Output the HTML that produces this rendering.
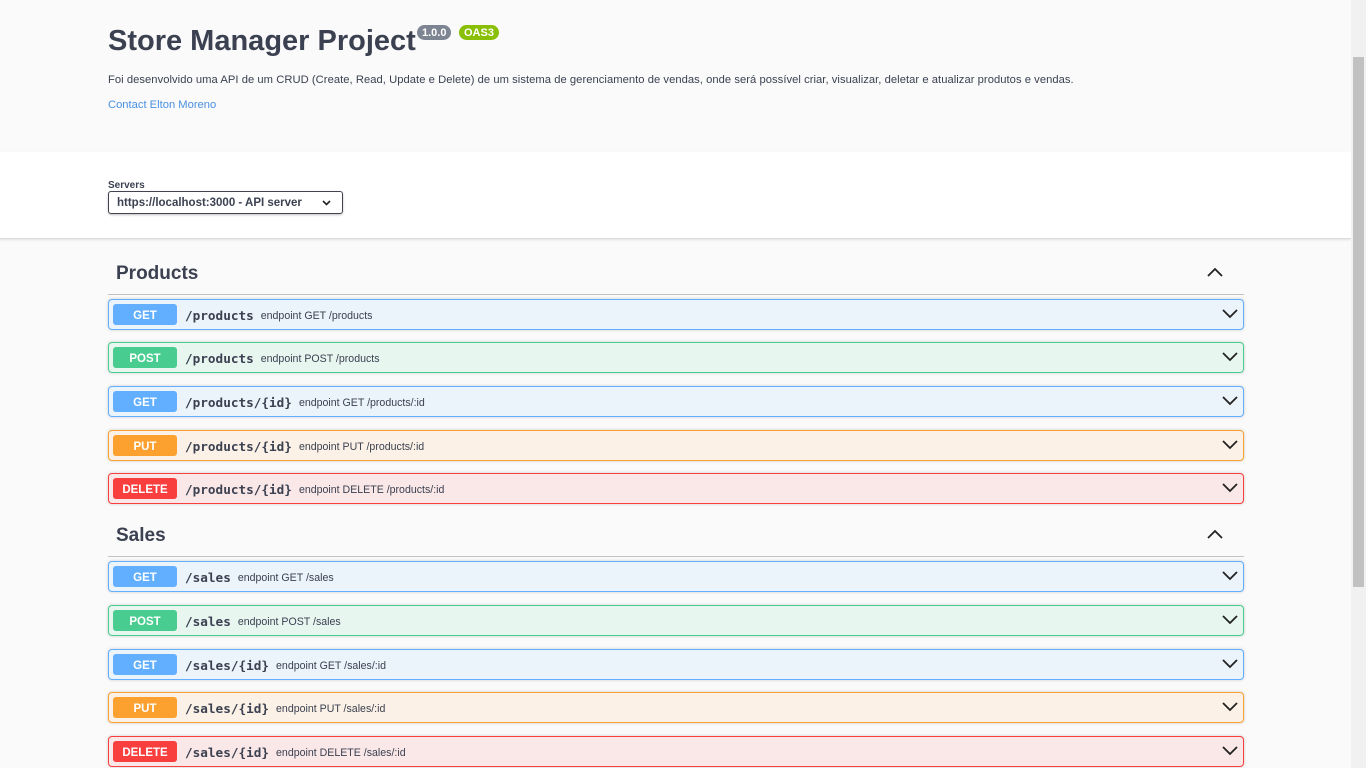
<!DOCTYPE html>
<html><head><meta charset="utf-8"><style>
*{box-sizing:border-box;margin:0;padding:0}
html,body{width:1366px;height:768px;overflow:hidden;background:#fafafa;font-family:"Liberation Sans",sans-serif;color:#3b4151}
.main{position:absolute;left:0;top:0;width:1351px}
.info{height:152px;background:#fafafa;padding:0 108px;position:relative}
h1{position:absolute;left:108px;top:25px;font-size:29px;font-weight:bold;color:#3b4151}
.badge{position:absolute;top:25px;height:15px;border-radius:8px;color:#fff;font-size:11px;font-weight:bold;line-height:16px;padding:0 5px}
.desc{position:absolute;left:108px;top:74px;font-size:11.2px;letter-spacing:0.05px}
.contact{position:absolute;left:108px;top:99px;font-size:11.2px;color:#4990e2}
.servers{position:absolute;top:152px;left:0;width:1351px;height:87px;background:#fff;border-bottom:1px solid #ddd;box-shadow:0 1px 2px rgba(0,0,0,.1)}
.servers .lbl{position:absolute;left:108px;top:28px;font-size:10px;font-weight:bold}
.sel{position:absolute;left:108px;top:39px;width:235px;height:23px;border:1px solid #41444e;border-radius:3px;box-shadow:0 1px 2px rgba(0,0,0,.25);font-size:11.5px;font-weight:bold;padding:5px 8px}
.sel svg{position:absolute;right:11px;top:8px}
.tag{position:absolute;left:108px;width:1136px;height:22px;border-bottom:1px solid rgba(59,65,81,.3)}
.tag span{position:absolute;left:8px;top:-10px;font-size:19px;font-weight:bold}
.tag svg{position:absolute;right:21px;top:-6px}
.op{position:absolute;left:108px;width:1136px;height:31px;border:1px solid;border-radius:4px;box-shadow:0 0 3px rgba(0,0,0,.19)}
.m{position:absolute;left:4px;top:4px;width:64px;height:21px;border-radius:3px;color:#fff;font-size:11.5px;font-weight:bold;text-align:center;line-height:24px}
.p{position:absolute;left:76px;top:8px;font-family:"DejaVu Sans Mono","Liberation Mono",monospace;font-weight:bold;font-size:12.7px;color:#3b4151}
.d{font-family:"Liberation Sans",sans-serif;font-weight:normal;font-size:10.6px;margin-left:7px;position:relative;top:-1px}
.op svg{position:absolute;right:5px;top:9px}
.get{background:#ebf3fb;border-color:#61affe}.get .m{background:#61affe}
.post{background:#e8f6f0;border-color:#49cc90}.post .m{background:#49cc90}
.put{background:#fbf1e6;border-color:#fca130}.put .m{background:#fca130}
.del{background:#fae7e7;border-color:#f93e3e}.del .m{background:#f93e3e}
.sb{position:absolute;left:1351px;top:0;width:15px;height:768px;background:#f1f1f1}
.sb div{position:absolute;left:2px;top:57px;width:11px;height:530px;background:#c1c1c1}
</style></head><body>
<div class="main">
<div class="info">
<h1>Store Manager Project</h1>
<span class="badge" style="left:417px;background:#7d8492">1.0.0</span>
<span class="badge" style="left:459px;background:#89bf04">OAS3</span>
<div class="desc">Foi desenvolvido uma API de um CRUD (Create, Read, Update e Delete) de um sistema de gerenciamento de vendas, onde será possível criar, visualizar, deletar e atualizar produtos e vendas.</div>
<div class="contact">Contact Elton Moreno</div>
</div>
<div class="servers"><div class="lbl">Servers</div><div class="sel">https://localhost:3000 - API server<svg width="9" height="6" viewBox="0 0 9 6"><path d="M1 1l3.5 3.5L8 1" stroke="#222" stroke-width="1.6" fill="none"/></svg></div></div>

<div class="tag" style="top:273px"><span>Products</span><svg width="16" height="10" viewBox="0 0 16 10"><path d="M1 9L8 2l7 7" stroke="#222" stroke-width="1.8" fill="none"/></svg></div>
<div class="op get" style="top:299px"><div class="m">GET</div><div class="p">/products<span class="d">endpoint GET /products</span></div><svg width="16" height="10"><path d="M1 1l7 7 7-7" stroke="#222" stroke-width="1.8" fill="none"/></svg></div>
<div class="op post" style="top:342px"><div class="m">POST</div><div class="p">/products<span class="d">endpoint POST /products</span></div><svg width="16" height="10"><path d="M1 1l7 7 7-7" stroke="#222" stroke-width="1.8" fill="none"/></svg></div>
<div class="op get" style="top:386px"><div class="m">GET</div><div class="p">/products/{id}<span class="d">endpoint GET /products/:id</span></div><svg width="16" height="10"><path d="M1 1l7 7 7-7" stroke="#222" stroke-width="1.8" fill="none"/></svg></div>
<div class="op put" style="top:430px"><div class="m">PUT</div><div class="p">/products/{id}<span class="d">endpoint PUT /products/:id</span></div><svg width="16" height="10"><path d="M1 1l7 7 7-7" stroke="#222" stroke-width="1.8" fill="none"/></svg></div>
<div class="op del" style="top:473px"><div class="m">DELETE</div><div class="p">/products/{id}<span class="d">endpoint DELETE /products/:id</span></div><svg width="16" height="10"><path d="M1 1l7 7 7-7" stroke="#222" stroke-width="1.8" fill="none"/></svg></div>

<div class="tag" style="top:535px"><span>Sales</span><svg width="16" height="10" viewBox="0 0 16 10"><path d="M1 9L8 2l7 7" stroke="#222" stroke-width="1.8" fill="none"/></svg></div>
<div class="op get" style="top:561px"><div class="m">GET</div><div class="p">/sales<span class="d">endpoint GET /sales</span></div><svg width="16" height="10"><path d="M1 1l7 7 7-7" stroke="#222" stroke-width="1.8" fill="none"/></svg></div>
<div class="op post" style="top:605px"><div class="m">POST</div><div class="p">/sales<span class="d">endpoint POST /sales</span></div><svg width="16" height="10"><path d="M1 1l7 7 7-7" stroke="#222" stroke-width="1.8" fill="none"/></svg></div>
<div class="op get" style="top:649px"><div class="m">GET</div><div class="p">/sales/{id}<span class="d">endpoint GET /sales/:id</span></div><svg width="16" height="10"><path d="M1 1l7 7 7-7" stroke="#222" stroke-width="1.8" fill="none"/></svg></div>
<div class="op put" style="top:692px"><div class="m">PUT</div><div class="p">/sales/{id}<span class="d">endpoint PUT /sales/:id</span></div><svg width="16" height="10"><path d="M1 1l7 7 7-7" stroke="#222" stroke-width="1.8" fill="none"/></svg></div>
<div class="op del" style="top:736px"><div class="m">DELETE</div><div class="p">/sales/{id}<span class="d">endpoint DELETE /sales/:id</span></div><svg width="16" height="10"><path d="M1 1l7 7 7-7" stroke="#222" stroke-width="1.8" fill="none"/></svg></div>
</div>
<div class="sb"><div></div></div>
</body></html>
